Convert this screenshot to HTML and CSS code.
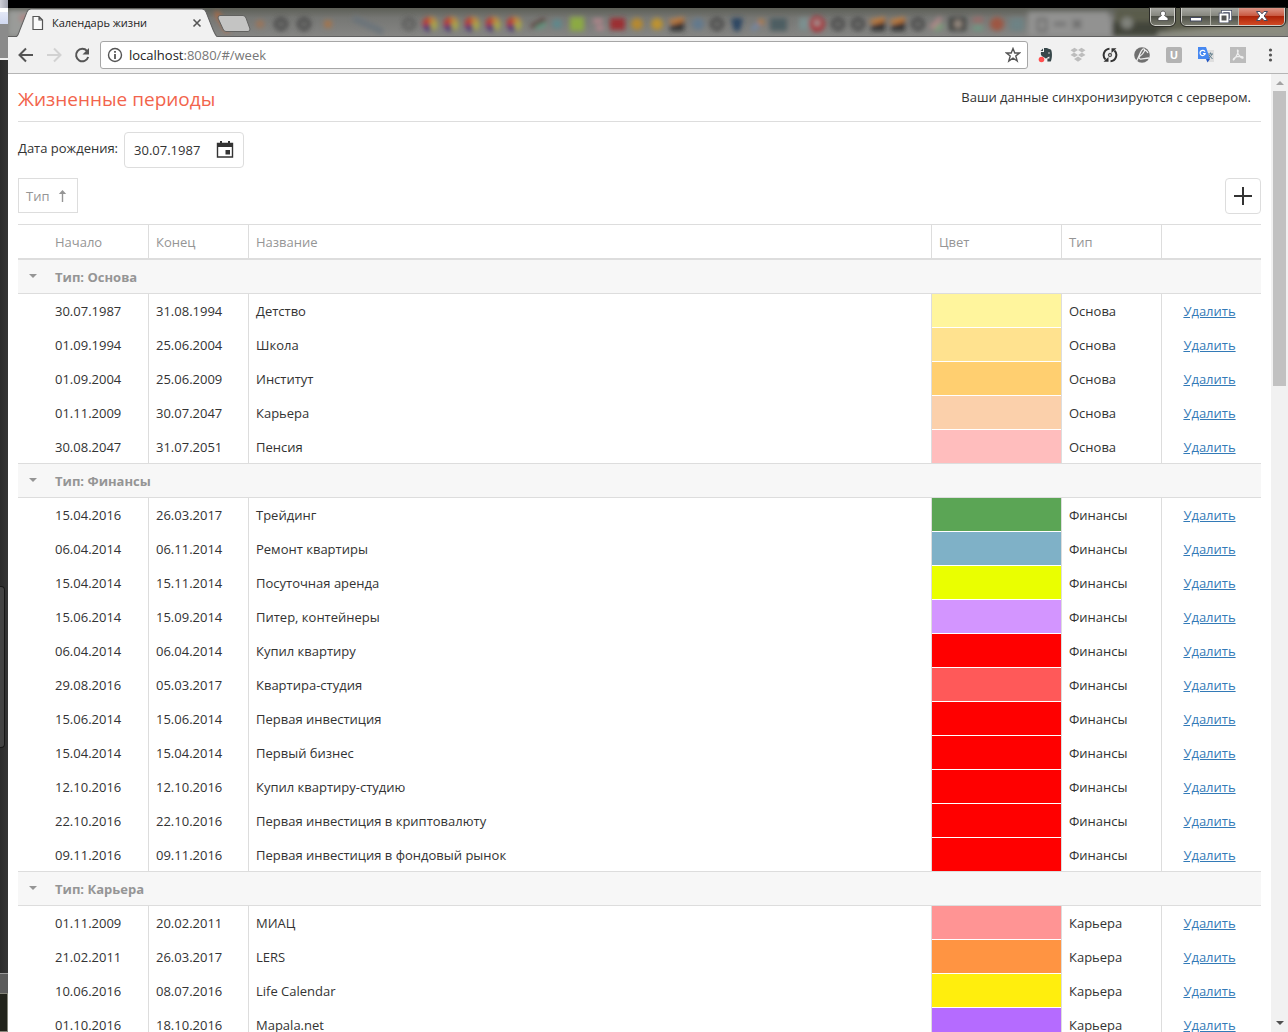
FILE: index.html
```html
<!DOCTYPE html>
<html lang="ru">
<head>
<meta charset="utf-8">
<title>Календарь жизни</title>
<link rel="stylesheet" href="styles.css">
</head>
<body>
<div class="desktop">
  <div class="behind" aria-hidden="true">
    <div class="behind-glass"></div>
    <div class="behind-bar"></div>
    <div class="behind-gray"></div>
    <div class="behind-dark"><div class="behind-thumb"></div></div>
    <div class="behind-status"></div>
    <div class="behind-taskbar"></div>
  </div>
  <div class="window">
    <div class="screen-edge"></div>
    <div class="tabstrip">
      <svg class="glass" viewBox="0 0 1280 28" preserveAspectRatio="xMinYMin slice" aria-hidden="true">
        <defs>
          <filter id="soft" x="-5%" y="-50%" width="110%" height="200%"><feGaussianBlur stdDeviation="2.500"/></filter>
          <linearGradient id="aero" x1="0" y1="0" x2="0" y2="1"><stop offset="0" stop-color="#5c5e56"/><stop offset=".35" stop-color="#767774"/><stop offset="1" stop-color="#858583"/></linearGradient>
          <g id="pin"><path d="M0 0V-7A7 7 0 0 0-7 2Z" fill="#c0392b"/><path d="M0 0L-7 2A7 7 0 0 0 2 7Z" fill="#4b2d77"/><path d="M0 0L2 7A7 7 0 0 0 7-3Z" fill="#a9a94a"/><path d="M0 0V-7A7 7 0 0 1 7-3Z" fill="#c08a3c"/></g>
          <g id="ring"><circle r="5" fill="none" stroke="#484848" stroke-width="4"/></g>
          <g id="so"><path d="M-8-4L7-7V0L-8-1Z" fill="#c77a35"/><path d="M-7 7V2L7-3V7Z" fill="#333"/></g>
        </defs>
        <rect width="1280" height="28" fill="url(#aero)"/>
        <g filter="url(#soft)">
          <path d="M0 2H25L12 28H0Z" fill="#9a9b99"/>
          <rect x="12" y="7" width="9" height="6" fill="#b08080"/>
          <path d="M208 4L220 24" stroke="#b9683a" stroke-width="4"/>
          <circle cx="252" cy="16" r="4" fill="#9b7458"/>
          <use href="#ring" x="273" y="16"/><use href="#ring" x="296" y="16"/>
          <circle cx="320" cy="16" r="4" fill="#a5744c"/>
          <path d="M345 10l30 14" stroke="#6b737a" stroke-width="6"/>
          <use href="#ring" x="401" y="16" opacity=".6"/>
          <use href="#pin" x="422" y="16"/><use href="#pin" x="443" y="16"/><use href="#pin" x="464" y="16"/><use href="#pin" x="485" y="16"/><use href="#pin" x="506" y="16"/>
          <path d="M523 19l14-8" stroke="#5a3e38" stroke-width="4"/><path d="M528 20l10-4" stroke="#609b83" stroke-width="4"/>
          <circle cx="549" cy="16" r="5" fill="#5e888c"/>
          <rect x="562" y="9" width="14" height="14" fill="#8caa43"/>
          <path d="M585 13h10M588 20h8" stroke="#bd8890" stroke-width="4"/>
          <rect x="602" y="10" width="15" height="12" fill="#9c2e32"/>
          <circle cx="629" cy="16" r="6" fill="#b6892d"/><circle cx="649" cy="16" r="6" fill="#bd932f"/>
          <use href="#so" x="669" y="16"/>
          <circle cx="690" cy="16" r="6" fill="#64798d"/>
          <use href="#ring" x="709" y="16"/>
          <path d="M723 10h12l-3 13h-6Z" fill="#2b4562"/>
          <path d="M744 22l8-7" stroke="#7187a8" stroke-width="4"/><circle cx="753" cy="14" r="3" fill="#b77b40"/>
          <rect x="762" y="10" width="17" height="13" fill="#4e5d62"/>
          <rect x="791" y="10" width="14" height="12" fill="#7b9090"/>
          <circle cx="809" cy="16" r="8" fill="#a7353b"/><circle cx="809" cy="15" r="3" fill="#a0a0a0"/>
          <use href="#ring" x="830" y="16"/><use href="#ring" x="850" y="16"/>
          <use href="#so" x="870" y="16"/><use href="#so" x="890" y="16"/>
          <use href="#ring" x="910" y="16"/>
          <path d="M923 20l10-10" stroke="#b5898a" stroke-width="4"/><path d="M927 22l8-5" stroke="#7ba47b" stroke-width="4"/>
          <rect x="941" y="9" width="17" height="14" fill="#3f4240"/><circle cx="950" cy="16" r="4" fill="#9a8d83"/>
          <path d="M965 12h10" stroke="#9d6b68" stroke-width="5"/><path d="M965 20h10" stroke="#6f9a83" stroke-width="5"/>
          <circle cx="989" cy="16" r="7" fill="#9e5742"/>
          <rect x="1002" y="10" width="14" height="13" fill="#6d8284"/>
          <path d="M1020 4h80l8 24h-88Z" fill="#929291"/>
          <rect x="1030" y="11" width="8" height="12" fill="none" stroke="#5e5e5e" stroke-width="2"/>
          <path d="M1046 16h12M1065 12l8 8M1073 12l-8 8" stroke="#666" stroke-width="3"/>
          <path d="M1108 0H1280V28H1104Z" fill="#5a5b4b"/>
          <path d="M1104 14h40l20 8-20 6h-40Z" fill="#43443a"/>
          <circle cx="1119" cy="15" r="6" fill="#80827b"/>
          <path d="M1150 24L1280 14V28H1150Z" fill="#8b8c7f"/>
        </g>
      </svg>
      <div class="tab">
        <svg class="tab-shape" viewBox="0 0 210 28" preserveAspectRatio="none" aria-hidden="true"><path d="M0 29C5 28 5 26 7 21L14 4Q15 1 18 1H190Q193 1 194 4L201 21C204 27 204 28 209 29Z" fill="#f1f1f1" stroke="#606060"/></svg>
        <svg class="tab-icon" width="12" height="14" viewBox="0 0 12 14" aria-hidden="true"><path d="M1 .5H7L10.500 4V13.500H1ZM7 .5V4H10.500" fill="#fafafa" stroke="#555" stroke-width="1.200"/></svg>
        <span class="tab-title">Календарь жизни</span>
        <button class="plain tab-close" aria-label="Закрыть вкладку"><svg width="10" height="10" viewBox="0 0 10 10"><path d="M1.500 1.500L8.500 8.500M8.500 1.500L1.500 8.500" stroke="#555" stroke-width="1.600"/></svg></button>
      </div>
      <button class="plain new-tab" aria-label="Новая вкладка"><svg width="34" height="18" viewBox="0 0 34 18"><path d="M3 .5H26Q28 .5 29 3L33 14Q33 16.500 31 16.500H9Q7 16.500 6 14L1 3Q1 .5 3 .5Z" fill="#c4c4c3" stroke="#626260"/></svg></button>
      <div class="caption">
        <button class="cap user" aria-label="Пользователь"><svg width="14" height="12" viewBox="0 0 14 12"><path d="M7 1a2.500 2.500 0 0 1 1.500 4.500L12 8v2.500H2V8L5.500 5.500A2.500 2.500 0 0 1 7 1Z" fill="#fff" stroke="#444" stroke-width=".8"/></svg></button>
        <div class="cap-group">
          <button class="cap min" aria-label="Свернуть"><svg width="14" height="12" viewBox="0 0 14 12"><rect x="1.500" y="7.500" width="11" height="3.500" fill="#fff" stroke="#444a60"/></svg></button>
          <button class="cap max" aria-label="Восстановить"><svg width="14" height="13" viewBox="0 0 14 13"><path d="M4.500 1.500H12.500V9.500H4.500Z" fill="none" stroke="#444a60" stroke-width="3"/><path d="M4.500 1.500H12.500V9.500H4.500Z" fill="none" stroke="#fff" stroke-width="1.500"/><rect x="2.500" y="4.500" width="7" height="7" fill="#555" stroke="#444a60" stroke-width="3.500"/><rect x="2.500" y="4.500" width="7" height="7" fill="#555" stroke="#fff" stroke-width="2"/></svg></button>
          <button class="cap close" aria-label="Закрыть"><svg width="14" height="12" viewBox="0 0 14 12"><path d="M1.500 1.500H5L7 3.800 9 1.500H12.500L9.200 6 12.500 10.500H9L7 8.200 5 10.500H1.500L4.800 6Z" fill="#fff" stroke="#444a60"/></svg></button>
        </div>
      </div>
    </div>
    <div class="toolbar">
      <button class="plain" aria-label="Назад"><svg width="16" height="16" viewBox="0 0 16 16"><path d="M15 8H2M8 1.500L1.500 8L8 14.500" fill="none" stroke="#555" stroke-width="2"/></svg></button>
      <button class="plain" aria-label="Вперёд"><svg width="16" height="16" viewBox="0 0 16 16"><path d="M1 8H14M8 1.500L14.500 8L8 14.500" fill="none" stroke="#d2d2d2" stroke-width="2"/></svg></button>
      <button class="plain" aria-label="Обновить"><svg width="16" height="16" viewBox="0 0 16 16"><path d="M13 4A6.200 6.200 0 1 0 14.200 10" fill="none" stroke="#555" stroke-width="2"/><path d="M15 1V7.500H8.500Z" fill="#555"/></svg></button>
      <div class="omnibox">
        <svg width="16" height="16" viewBox="0 0 16 16" aria-hidden="true"><circle cx="8" cy="8" r="6.500" fill="none" stroke="#555" stroke-width="1.400"/><path d="M8 7V12M8 4V5.800" stroke="#555" stroke-width="1.800"/></svg>
        <a class="url" href="#/week"><span class="host">localhost</span>:8080/#/week</a>
        <button class="plain" aria-label="В закладки"><svg width="16" height="16" viewBox="0 0 16 16"><path d="M8 1.500L9.800 6H14.500L10.800 9L12.200 14L8 11.200L3.800 14L5.200 9L1.500 6H6.200Z" fill="none" stroke="#555" stroke-width="1.400"/></svg></button>
      </div>
      <div class="extensions">
        <button class="plain" aria-label="Evernote"><svg width="16" height="16" viewBox="0 0 16 16"><path d="M6 1H9C10 2 12.500 1.800 13.200 3C14.400 6 14.200 12 12.700 14.500H9.400V11.500H11.400V9.500C9.700 9.800 9.200 11.500 7.700 11.500C6.700 11 6.200 10 4.500 9.500C3 9 2.500 7 3 5H6Z" fill="#37474a"/><path d="M5 1.500V4H2.500Z" fill="#37474a"/><circle cx="11" cy="6" r=".8" fill="#ddd"/><circle cx="3.500" cy="12.500" r="2.800" fill="#ff4f4f"/></svg></button>
        <button class="plain" aria-label="Dropbox"><svg width="16" height="16" viewBox="0 0 16 16" fill="#bdbdbd"><path d="M4.500 .8L8 3L4 5.500L.5 3.200ZM11.500 .8L15.500 3.200L12 5.500L8 3ZM.5 8L4 5.600L8 8L4.500 10.300ZM15.500 8L12 5.600L8 8L11.500 10.300ZM8 9.500L12 12L8 14.800L4 12Z"/></svg></button>
        <button class="plain" aria-label="Синхронизация"><svg width="16" height="16" viewBox="0 0 16 16"><path d="M7.500 1.700A6.300 6.300 0 0 0 3.600 12.500M8.500 14.300A6.300 6.300 0 0 0 12.400 3.500" fill="none" stroke="#333" stroke-width="2"/><path d="M1.500 14.800H6.500V10ZM14.500 1.200H9.500V6Z" fill="#333"/><circle cx="8" cy="8" r="1.500" fill="none" stroke="#555" stroke-width="1.300"/></svg></button>
        <button class="plain" aria-label="Перо"><svg width="16" height="16" viewBox="0 0 16 16"><circle cx="8" cy="8" r="7.800" fill="#707070"/><path d="M2 15C5 11 6 4 9 2C12 1 11 6 5 10C5 14 10 11 15 11M11 3Q13 4 14 6" fill="none" stroke="#eee" stroke-width="1.300"/></svg></button>
        <button class="plain" aria-label="uBlock"><span class="u-badge">U</span></button>
        <button class="plain" aria-label="Переводчик"><svg width="16" height="16" viewBox="0 0 16 16"><path d="M6 3H16V15H9Z" fill="#dedede"/><path d="M0 0H8L12 12H0Z" fill="#4688f1"/><path d="M8 12H12L9.500 15.500Z" fill="#2457c5"/><path d="M7 4.800A2.600 2.600 0 1 0 7.200 6.500H5" fill="none" stroke="#fff" stroke-width="1.200"/><path d="M10 7H15M12.500 5.500V7M14 7Q13 10 10.500 11M11 8L14.500 12" fill="none" stroke="#607d8b"/></svg></button>
        <button class="plain" aria-label="PDF"><svg width="16" height="16" viewBox="0 0 16 16"><path d="M0 0H16V16H0Z" fill="#bcbcbc"/><path d="M7.500 3C9 3 8 7 4.500 12C3 14 2.500 12 5 10.500C8 9 14 9 13 11C12 12 8 8 7.500 5Z" fill="none" stroke="#eee" stroke-width="1.200"/></svg></button>
        <button class="plain" aria-label="Меню"><svg width="16" height="16" viewBox="0 0 16 16" fill="#555"><circle cx="8.500" cy="3" r="1.600"/><circle cx="8.500" cy="8" r="1.600"/><circle cx="8.500" cy="13" r="1.600"/></svg></button>
      </div>
    </div>
    <div class="viewport">
      <main class="page">
        <header class="page-head">
          <h1>Жизненные периоды</h1>
          <p>Ваши данные синхронизируются с сервером.</p>
        </header>
        <div class="birth">
          <label for="birth">Дата рождения:</label>
          <div class="datebox">
            <input id="birth" type="text" value="30.07.1987">
            <button class="plain" aria-label="Выбрать дату"><svg width="18" height="18" viewBox="0 0 18 18"><path d="M1.500 2.500H16.500V16H1.500Z" fill="none" stroke="#333" stroke-width="1.400"/><path d="M1 2H17V6H1ZM4 0H6V3H4ZM12 0H14V3H12ZM9.500 9H14V13.500H9.500Z" fill="#333"/></svg></button>
          </div>
        </div>
        <div class="panel">
          <button class="group-by">Тип <svg width="9" height="12" viewBox="0 0 9 12" aria-hidden="true"><path d="M4.500 12V2" stroke="#959595" stroke-width="1.400"/><path d="M4.500 0L8.200 4H.8Z" fill="#959595"/></svg></button>
          <button class="add" aria-label="Добавить"><svg width="18" height="18" viewBox="0 0 18 18"><path d="M9 0V18M0 9H18" stroke="#333" stroke-width="2"/></svg></button>
        </div>
        <table class="grid">
          <colgroup><col class="c-exp"><col class="c-date"><col class="c-date"><col><col class="c-color"><col class="c-date"><col class="c-date"></colgroup>
          <thead>
            <tr><th></th><th>Начало</th><th>Конец</th><th>Название</th><th>Цвет</th><th>Тип</th><th></th></tr>
          </thead>
          <tbody>
            <tr class="group"><td><span class="arrow"></span></td><td colspan="6">Тип: Основа</td></tr>
            <tr><td></td><td>30.07.1987</td><td>31.08.1994</td><td>Детство</td><td style="background-color:#fff59d"></td><td>Основа</td><td><a href="#">Удалить</a></td></tr>
            <tr><td></td><td>01.09.1994</td><td>25.06.2004</td><td>Школа</td><td style="background-color:#ffe28f"></td><td>Основа</td><td><a href="#">Удалить</a></td></tr>
            <tr><td></td><td>01.09.2004</td><td>25.06.2009</td><td>Институт</td><td style="background-color:#ffcf70"></td><td>Основа</td><td><a href="#">Удалить</a></td></tr>
            <tr><td></td><td>01.11.2009</td><td>30.07.2047</td><td>Карьера</td><td style="background-color:#fbd0ab"></td><td>Основа</td><td><a href="#">Удалить</a></td></tr>
            <tr><td></td><td>30.08.2047</td><td>31.07.2051</td><td>Пенсия</td><td style="background-color:#ffbdbd"></td><td>Основа</td><td><a href="#">Удалить</a></td></tr>
          </tbody>
          <tbody>
            <tr class="group"><td><span class="arrow"></span></td><td colspan="6">Тип: Финансы</td></tr>
            <tr><td></td><td>15.04.2016</td><td>26.03.2017</td><td>Трейдинг</td><td style="background-color:#5ba555"></td><td>Финансы</td><td><a href="#">Удалить</a></td></tr>
            <tr><td></td><td>06.04.2014</td><td>06.11.2014</td><td>Ремонт квартиры</td><td style="background-color:#7fb1c7"></td><td>Финансы</td><td><a href="#">Удалить</a></td></tr>
            <tr><td></td><td>15.04.2014</td><td>15.11.2014</td><td>Посуточная аренда</td><td style="background-color:#eaff00"></td><td>Финансы</td><td><a href="#">Удалить</a></td></tr>
            <tr><td></td><td>15.06.2014</td><td>15.09.2014</td><td>Питер, контейнеры</td><td style="background-color:#d395ff"></td><td>Финансы</td><td><a href="#">Удалить</a></td></tr>
            <tr><td></td><td>06.04.2014</td><td>06.04.2014</td><td>Купил квартиру</td><td style="background-color:#ff0000"></td><td>Финансы</td><td><a href="#">Удалить</a></td></tr>
            <tr><td></td><td>29.08.2016</td><td>05.03.2017</td><td>Квартира-студия</td><td style="background-color:#ff5959"></td><td>Финансы</td><td><a href="#">Удалить</a></td></tr>
            <tr><td></td><td>15.06.2014</td><td>15.06.2014</td><td>Первая инвестиция</td><td style="background-color:#ff0000"></td><td>Финансы</td><td><a href="#">Удалить</a></td></tr>
            <tr><td></td><td>15.04.2014</td><td>15.04.2014</td><td>Первый бизнес</td><td style="background-color:#ff0000"></td><td>Финансы</td><td><a href="#">Удалить</a></td></tr>
            <tr><td></td><td>12.10.2016</td><td>12.10.2016</td><td>Купил квартиру-студию</td><td style="background-color:#ff0000"></td><td>Финансы</td><td><a href="#">Удалить</a></td></tr>
            <tr><td></td><td>22.10.2016</td><td>22.10.2016</td><td>Первая инвестиция в криптовалюту</td><td style="background-color:#ff0000"></td><td>Финансы</td><td><a href="#">Удалить</a></td></tr>
            <tr><td></td><td>09.11.2016</td><td>09.11.2016</td><td>Первая инвестиция в фондовый рынок</td><td style="background-color:#ff0000"></td><td>Финансы</td><td><a href="#">Удалить</a></td></tr>
          </tbody>
          <tbody>
            <tr class="group"><td><span class="arrow"></span></td><td colspan="6">Тип: Карьера</td></tr>
            <tr><td></td><td>01.11.2009</td><td>20.02.2011</td><td>МИАЦ</td><td style="background-color:#ff9494"></td><td>Карьера</td><td><a href="#">Удалить</a></td></tr>
            <tr><td></td><td>21.02.2011</td><td>26.03.2017</td><td>LERS</td><td style="background-color:#ff9442"></td><td>Карьера</td><td><a href="#">Удалить</a></td></tr>
            <tr><td></td><td>10.06.2016</td><td>08.07.2016</td><td>Life Calendar</td><td style="background-color:#ffee0d"></td><td>Карьера</td><td><a href="#">Удалить</a></td></tr>
            <tr><td></td><td>01.10.2016</td><td>18.10.2016</td><td>Mapala.net</td><td style="background-color:#b56bff"></td><td>Карьера</td><td><a href="#">Удалить</a></td></tr>
          </tbody>
        </table>
      </main>
      <div class="scrollbar" aria-hidden="true">
        <span class="sb-up"></span>
        <div class="sb-thumb"></div>
        <span class="sb-down"></span>
      </div>
    </div>
  </div>
</div>
</body>
</html>
```
FILE: styles.css
```css
* { box-sizing: border-box; }

body {
  margin: 0;
  font-family: "Open Sans", "Noto Sans", sans-serif;
  font-size: 13px;
  line-height: 18px;
  color: #333;
  background: #fff;
}

h1, p { margin: 0; font-weight: 400; }
svg { display: block; flex: none; }
button, input { font: inherit; color: inherit; margin: 0; }

.plain {
  display: flex;
  padding: 0;
  border: 0;
  background: none;
}

.desktop {
  display: flex;
  height: 100vh;
  overflow: hidden;
}

/* Sliver of the windows behind the browser */
.behind {
  flex: none;
  display: flex;
  flex-direction: column;
  width: 8px;
}
.behind-glass { height: 8px; background: linear-gradient(90deg, #cdced6, #9fa1ad); }
.behind-bar { height: 16px; background: linear-gradient(#e4e8f6, #d0d8f0); border-top: 4px solid #fff; }
.behind-gray { height: 36px; background: #8b8b8b; border-bottom: 2px solid #f0f0f0; }
.behind-dark { flex: 1; padding-top: 526px; background: linear-gradient(90deg, #2b2b2b, #353535); }
.behind-thumb { width: 5px; height: 162px; background: #444; border: 1px solid #181818; border-left: 0; border-radius: 0 4px 4px 0; }
.behind-status { height: 20px; background: #5c5c5c; border-top: 1px solid #999; }
.behind-taskbar { height: 39px; background: #22231b; border: 1px solid #85857a; border-left: 0; }

.window {
  flex: 1;
  min-width: 0;
  display: flex;
  flex-direction: column;
}
.screen-edge { flex: none; height: 8px; background: #000; }

/* Title bar */
.tabstrip {
  flex: none;
  position: relative;
  display: flex;
  align-items: flex-start;
  height: 29px;
  border-bottom: 1px solid #606060;
}
.glass { position: absolute; top: 0; left: 0; width: 100%; height: 28px; }
.tab {
  position: relative;
  display: flex;
  align-items: center;
  width: 209px;
  height: 29px;
  margin-left: 5px;
  padding: 1px 20px 0 19px;
  font-size: 11px;
  color: #222;
}
.tab-shape { position: absolute; top: 0; left: 0; width: 100%; height: 29px; }
.tab-icon, .tab-title, .tab-close { position: relative; }
.tab-title { flex: 1; padding-left: 8px; white-space: nowrap; }
.new-tab { position: relative; margin-top: 7px; margin-left: -5px; }

.caption {
  position: relative;
  display: flex;
  gap: 6px;
  margin-left: auto;
  padding-right: 3px;
}
.cap {
  display: flex;
  justify-content: center;
  padding: 2px 0 0;
  width: 28px;
  height: 17px;
  border: 0;
  border-left: 1px solid #b5b5ac;
  background: linear-gradient(#a7a8a2, #85867e 45%, #4e5047 50%, #77786d);
}
.user { width: 25px; height: 18px; border: 1px solid #d0d0ca; border-top: 0; border-radius: 0 0 5px 5px; outline: 1px solid #2c2c28; }
.cap-group {
  display: flex;
  border: 1px solid #d0d0ca;
  border-top: 0;
  border-radius: 0 0 5px 5px;
  outline: 1px solid #2c2c28;
  overflow: hidden;
}
.min { border-left: 0; }
.close { width: 46px; background: linear-gradient(#dd9586, #c95a42 45%, #ac2308 50%, #d24a25); }

/* Browser toolbar */
.toolbar {
  flex: none;
  display: flex;
  align-items: center;
  gap: 12px;
  height: 37px;
  padding: 0 10px;
  background: #f1f1f1;
  border-bottom: 1px solid #b5b5b5;
}
.omnibox {
  flex: 1;
  display: flex;
  align-items: center;
  gap: 6px;
  height: 28px;
  margin: 0 -2px;
  padding: 0 6px;
  background: #fff;
  border: 1px solid #a6a6a6;
  border-radius: 3px;
}
.url { flex: 1; color: #777; text-decoration: none; }
.host { color: #222; }
.extensions { display: flex; gap: 16px; }
.u-badge {
  width: 16px;
  height: 16px;
  border-radius: 2px;
  background: #b3b3b3;
  color: #fff;
  font-size: 11px;
  font-weight: 700;
  line-height: 16px;
  text-align: center;
}

/* Page */
.viewport { flex: 1; min-height: 0; display: flex; }
.page {
  flex: 1;
  min-width: 0;
  display: flex;
  flex-direction: column;
  gap: 10px;
  padding: 0 10px;
  overflow: hidden;
}
.page > * { flex: none; }
.page-head {
  display: flex;
  justify-content: space-between;
  height: 48px;
  padding: 14px 10px 0 0;
  border-bottom: 1px solid #ddd;
}
h1 { font-size: 19px; line-height: 22px; color: #f2644c; }
.birth { display: flex; gap: 6px; }
.birth label { padding-top: 7px; }
.datebox {
  display: flex;
  align-items: center;
  width: 120px;
  height: 36px;
  padding: 0 9px;
  border: 1px solid #ddd;
  border-radius: 4px;
}
.datebox input { flex: 1; min-width: 0; padding: 0; border: 0; background: none; }
.panel { display: flex; justify-content: space-between; height: 36px; }
.group-by {
  display: flex;
  align-items: center;
  gap: 8px;
  height: 35px;
  width: 60px;
  padding: 0 7px;
  border: 1px solid #ddd;
  background: #fff;
  color: #959595;
}
.add {
  display: flex;
  align-items: center;
  justify-content: center;
  width: 36px;
  height: 36px;
  padding: 0;
  border: 1px solid #ddd;
  border-radius: 4px;
  background: #fff;
}

/* Data grid */
.grid {
  width: 100%;
  table-layout: fixed;
  border-collapse: separate;
  border-spacing: 0;
}
.c-exp { width: 30px; }
.c-date { width: 100px; }
.c-color { width: 130px; }
th, td { height: 34px; padding: 0 7px 1px; text-align: left; white-space: nowrap; }
th {
  height: 36px;
  padding: 1px 7px 0;
  border-top: 1px solid #ddd;
  border-bottom: 2px solid #ddd;
  font-weight: 400;
  color: #959595;
}
td { box-shadow: inset 0 -1px #fff; }
th:nth-child(n+3), td:nth-child(n+3) { border-left: 1px solid #ddd; }
td:last-child:not([colspan]) { text-align: center; padding: 0 8px 1px 4px; }
tbody:not(:last-child) tr:last-child td { box-shadow: inset 0 -1px #ddd; }
.group td {
  background: #f7f7f7;
  box-shadow: inset 0 -1px #ddd;
  font-weight: 700;
  color: #959595;
}
.arrow {
  display: block;
  width: 8px;
  margin: -2px 0 0 4px;
  border: 4px solid transparent;
  border-top-color: #959595;
  border-bottom: 0;
}
.grid a { color: #337ab7; }

/* Scroll bar */
.scrollbar {
  flex: none;
  display: flex;
  flex-direction: column;
  align-items: center;
  width: 17px;
  padding: 7px 0;
  background: #f1f1f1;
}
.sb-up, .sb-down { border: 4px solid transparent; }
.sb-up { border-top: 0; border-bottom-color: #a3a3a3; }
.sb-down { margin-top: auto; border-bottom: 0; border-top-color: #505050; }
.sb-thumb { width: 13px; height: 295px; margin-top: 6px; background: #c1c1c1; }
```
